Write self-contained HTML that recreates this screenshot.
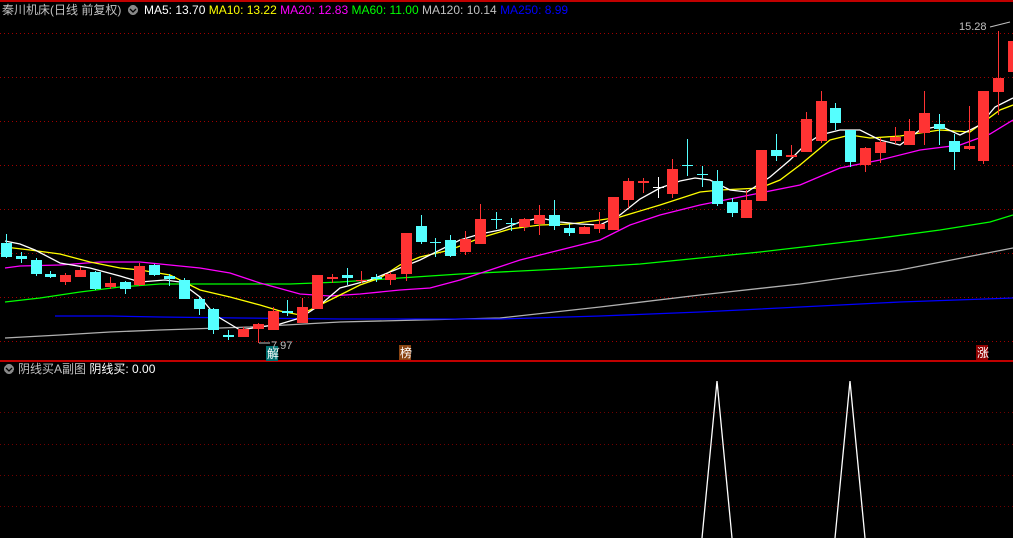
<!DOCTYPE html>
<html><head><meta charset="utf-8"><style>
body{margin:0;background:#000;width:1013px;height:538px;overflow:hidden;font-family:"Liberation Sans","Noto Sans CJK SC",sans-serif}
svg{position:absolute;left:0;top:0}
.t{position:absolute;font-size:12px;white-space:nowrap;line-height:14px}
</style></head><body>
<svg width="1013" height="538" viewBox="0 0 1013 538" shape-rendering="crispEdges">
<rect x="0" y="0" width="1013" height="2" fill="#c00000"/>
<g stroke="#a00000" stroke-width="1" stroke-dasharray="1,3">
<line x1="0" y1="33.5" x2="1013" y2="33.5"/><line x1="0" y1="77.5" x2="1013" y2="77.5"/>
<line x1="0" y1="121.5" x2="1013" y2="121.5"/><line x1="0" y1="165.5" x2="1013" y2="165.5"/>
<line x1="0" y1="209.5" x2="1013" y2="209.5"/><line x1="0" y1="253.5" x2="1013" y2="253.5"/>
<line x1="0" y1="297.5" x2="1013" y2="297.5"/><line x1="0" y1="341.5" x2="1013" y2="341.5"/>
</g>
<g stroke="#700000" stroke-width="1" stroke-dasharray="1,3">
<line x1="0" y1="412.5" x2="1013" y2="412.5"/><line x1="0" y1="444.5" x2="1013" y2="444.5"/>
<line x1="0" y1="475.5" x2="1013" y2="475.5"/><line x1="0" y1="506.5" x2="1013" y2="506.5"/>
</g>
<rect x="0" y="360" width="1013" height="2" fill="#c00000"/>
<g fill="none" stroke-width="1.3" shape-rendering="auto">
<polyline stroke="#b0b0b0" points="5,338 60,335 110,332 160,330 250,327 340,322 420,320 500,318 600,307 700,295 800,284 900,270 1013,248"/>
<polyline stroke="#0000ff" points="55,316 110,316 160,317 240,318 340,319 500,319 600,316 700,312 800,307 900,302 1013,298"/>
<polyline stroke="#00ff00" points="5,302 40,298 80,292 120,287 160,284 200,284 290,284 340,282 400,278 460,274 560,269 640,264 700,258 760,252 820,245 880,238 940,230 990,222 1013,215"/>
<polyline stroke="#ff00ff" points="5,268 20,266 60,265 100,262 140,262 170,265 200,268 230,273 260,283 300,294 330,296 360,294 400,290 430,288 460,280 490,270 520,260 560,250 600,240 630,225 660,215 700,205 740,197 760,193 800,185 840,168 880,160 920,150 960,145 990,134 1013,120"/>
<polyline stroke="#ffff00" points="5,247 30,250 60,254 90,262 120,268 140,270 170,275 200,290 230,297 260,305 280,311 300,315 330,300 360,285 380,278 400,265 420,257 450,250 480,238 510,229 540,225 570,224 600,220 620,217 660,205 700,192 720,190 760,188 780,180 800,165 830,140 850,135 870,138 900,136 940,130 970,132 1000,110 1013,105"/>
<polyline stroke="#ffffff" points="5,241 20,244 35,250 60,263 90,268 120,276 140,282 165,280 180,282 200,297 215,315 240,330 260,327 280,324 300,318 320,305 340,288 370,280 400,268 420,260 440,250 460,240 480,234 500,230 520,222 540,218 560,222 580,224 600,225 620,215 640,199 660,188 680,181 695,178 710,180 730,190 747,192 770,177 790,160 805,145 820,135 840,130 860,130 880,140 900,145 920,130 940,126 960,135 980,125 995,107 1013,98"/>
</g>
<g id="c"></g>
<g stroke="#fff" stroke-width="1.3" fill="none" shape-rendering="auto">
<polyline points="702,538 717,381 732,538"/><polyline points="835,538 850,381 865,538"/>
</g>
<rect x="266" y="346" width="12" height="15" fill="#007070"/>
<rect x="399" y="345" width="12" height="15" fill="#8b4513"/>
<rect x="976" y="345" width="12" height="15" fill="#900000"/>
<text x="267" y="358" font-size="12" fill="#fff" font-family="Noto Sans CJK SC,sans-serif">解</text>
<text x="400" y="357" font-size="12" fill="#fff" font-family="Noto Sans CJK SC,sans-serif">榜</text>
<text x="977" y="357" font-size="12" fill="#fff" font-family="Noto Sans CJK SC,sans-serif">涨</text>
<text x="271" y="349" font-size="11" fill="#c0c0c0" font-family="Liberation Sans,sans-serif">7.97</text>
<line x1="259" y1="343" x2="270" y2="343" stroke="#c0c0c0"/>
<text x="959" y="30" font-size="11" fill="#c0c0c0" font-family="Liberation Sans,sans-serif">15.28</text>
<line x1="990" y1="27" x2="1010" y2="22" stroke="#c0c0c0" shape-rendering="auto"/>
<circle cx="133" cy="10" r="5" fill="#888"/><path d="M130,9 L133,12 L136,9" stroke="#000" fill="none" stroke-width="1.3" shape-rendering="auto"/>
<circle cx="9" cy="369" r="5" fill="#888"/><path d="M6,368 L9,371 L12,368" stroke="#000" fill="none" stroke-width="1.3" shape-rendering="auto"/>
</svg>
<div class="t" style="left:2px;top:3px;color:#c0c0c0">秦川机床(日线 前复权)</div>
<div class="t" style="left:144px;top:3px"><span style="color:#fff">MA5: 13.70</span> <span style="color:#ffff00">MA10: 13.22</span> <span style="color:#ff00ff">MA20: 12.83</span> <span style="color:#00ff00">MA60: 11.00</span> <span style="color:#c0c0c0">MA120: 10.14</span> <span style="color:#0000ff">MA250: 8.99</span></div>
<div class="t" style="left:18px;top:362px;color:#c0c0c0">阴线买A副图 <span style="color:#fff">阴线买: 0.00</span></div>
<script>
var R="#ff3333",C="#55ffff",W="#ffffff";
var d=[[1,243,257,234,258,C],[16,256,259,252,263,C],[31,260,274,258,276,C],[45,274,277,271,278,C],[60,275,282,273,285,R],[75,270,277,267,277,R],[90,272,289,271,290,C],[105,283,287,277,289,R],[120,282,289,281,294,C],[134,266,285,263,286,R],[149,265,275,264,276,C],[164,276,279,274,286,C],[179,280,299,278,299,C],[194,299,309,297,315,C],[208,309,330,308,334,C],[223,335,337,330,340,C],[238,329,337,327,337,R],[253,324,329,323,343,R],[268,311,330,307,330,R],[282,311,313,300,316,C],[297,307,323,298,323,R],[312,275,309,275,309,R],[327,277,279,274,283,R],[342,275,278,268,285,C],[356,280,281,271,283,R],[371,277,279,274,282,C],[385,274,280,272,285,R],[401,233,274,233,281,R],[416,226,242,215,244,C],[430,242,243,238,257,C],[445,240,256,235,257,C],[460,239,252,231,255,R],[475,219,244,204,244,R],[491,219,220,212,229,C],[506,223,224,218,231,C],[519,219,227,218,231,R],[534,215,224,205,235,R],[549,215,226,200,230,C],[564,228,233,224,236,C],[579,227,234,226,234,R],[594,224,229,212,233,R],[608,197,230,197,230,R],[623,181,200,178,208,R],[638,181,183,178,193,R],[653,187,188,177,198,W],[667,169,194,159,198,R],[682,165,166,139,176,C],[697,174,175,166,187,C],[712,181,204,170,206,C],[727,202,213,198,217,C],[741,200,218,190,218,R],[756,150,201,150,201,R],[771,150,156,134,161,C],[786,155,157,145,157,R],[801,119,152,112,152,R],[816,101,141,91,143,R],[830,108,123,103,130,C],[845,130,162,130,167,C],[860,148,165,147,172,R],[875,142,153,138,163,R],[890,137,141,127,144,R],[904,131,145,119,145,R],[919,113,133,91,145,R],[934,124,129,114,145,C],[949,141,152,134,170,C],[964,146,149,106,150,R],[978,91,161,91,164,R],[993,78,92,31,115,R],[1008,41,72,41,72,R]];
var s="";d.forEach(function(a){var x=a[0],cx=x+5.5;s+='<line x1="'+cx+'" y1="'+a[3]+'" x2="'+cx+'" y2="'+a[4]+'" stroke="'+a[5]+'"/>';s+='<rect x="'+x+'" y="'+a[1]+'" width="11" height="'+Math.max(1,a[2]-a[1])+'" fill="'+a[5]+'"/>';});
document.getElementById("c").innerHTML=s;
</script>
</body></html>
